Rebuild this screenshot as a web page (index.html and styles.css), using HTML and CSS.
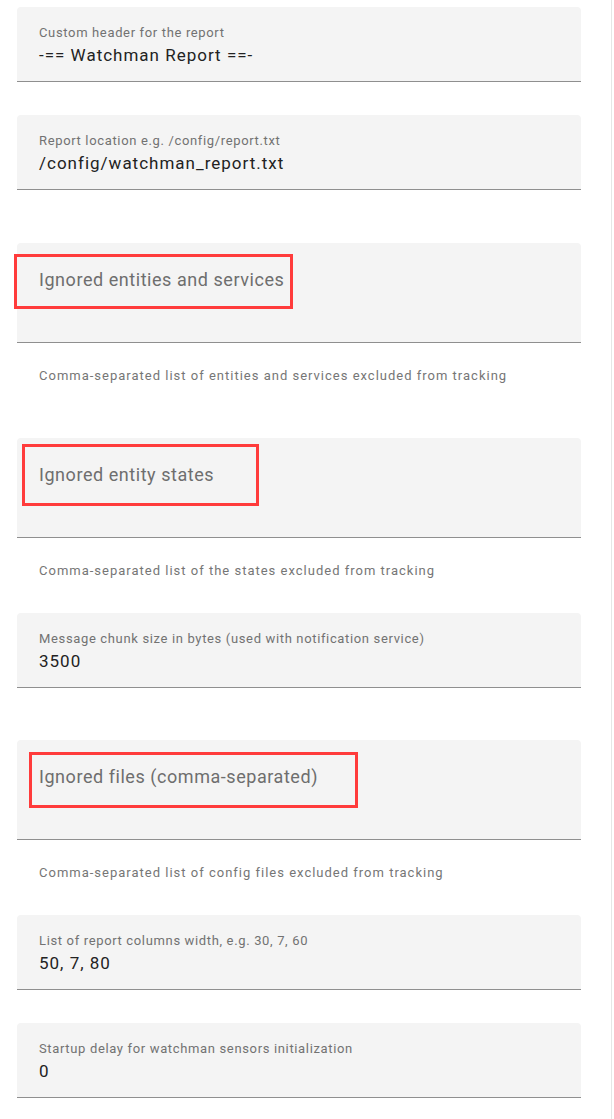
FILE: index.html
```html
<!DOCTYPE html>
<html lang="en">
<head>
    <meta charset="UTF-8">
    <meta name="viewport" content="width=device-width, initial-scale=1.0">
    <title>Watchman options</title>
    <link rel="stylesheet" href="styles.css">
</head>
<body>
    <div id="outer">
        <div class="field">
            <span class="label">Custom header for the report</span>
            <span class="value">-== Watchman Report ==-</span>
        </div>

        <div class="field">
            <span class="label">Report location e.g. /config/report.txt</span>
            <span class="value">/config/watchman_report.txt</span>
        </div>

        <div class="area">
            <span class="area-label">Ignored entities and services</span>
            <div class="mark mark-1"></div>
        </div>
        <div class="helper">Comma-separated list of entities and services excluded from tracking</div>

        <div class="area">
            <span class="area-label">Ignored entity states</span>
            <div class="mark mark-2"></div>
        </div>
        <div class="helper">Comma-separated list of the states excluded from tracking</div>

        <div class="field">
            <span class="label">Message chunk size in bytes (used with notification service)</span>
            <span class="value">3500</span>
        </div>

        <div class="area area-tight">
            <span class="area-label">Ignored files (comma-separated)</span>
            <div class="mark mark-3"></div>
        </div>
        <div class="helper">Comma-separated list of config files excluded from tracking</div>

        <div class="field">
            <span class="label">List of report columns width, e.g. 30, 7, 60</span>
            <span class="value">50, 7, 80</span>
        </div>

        <div class="field">
            <span class="label">Startup delay for watchman sensors initialization</span>
            <span class="value">0</span>
        </div>
    </div>
</body>
</html>
```

FILE: styles.css
```css
body{
    margin: 0;
    background-color: white;
    font-family: Roboto, "Liberation Sans", sans-serif;
}

#outer{
    width: 612px;
    min-height: 100vh;
    box-sizing: border-box;
    padding: 7px 30px 0 17px;
    border-right: 1px solid #e6e6e6;
    display: flex;
    flex-direction: column;
}

.field{
    flex-shrink: 0;
    height: 74px;
    margin-bottom: 33px;
    padding: 0 22px;
    background-color: #f4f4f4;
    border-radius: 4px 4px 0 0;
    border-bottom: 1px solid #8f8f8f;
    display: flex;
    flex-direction: column;
}

.label{
    margin-top: 18px;
    font-size: 13px;
    line-height: 16px;
    letter-spacing: 0.65px;
    color: #727272;
}

.value{
    margin-top: 2px;
    font-size: 17px;
    line-height: 24px;
    letter-spacing: 1px;
    color: #222;
}

.area{
    flex-shrink: 0;
    position: relative;
    height: 99px;
    margin-top: 20px;
    padding: 0 22px;
    background-color: #f4f4f4;
    border-radius: 4px 4px 0 0;
    border-bottom: 1px solid #8f8f8f;
}

.area-tight{
    margin-top: 19px;
}

.area-label{
    display: block;
    padding-top: 25px;
    font-size: 18px;
    line-height: 24px;
    letter-spacing: 0.55px;
    color: #6e6e6e;
}

.helper{
    flex-shrink: 0;
    height: 75px;
    box-sizing: border-box;
    padding: 25px 22px 0;
    font-size: 13px;
    line-height: 16px;
    letter-spacing: 1px;
    color: #767676;
}

/* red annotation boxes */
.mark{
    position: absolute;
    border: 3px solid #ff3b3b;
    box-sizing: border-box;
}
.mark-1{
    left: -3px;
    top: 11px;
    width: 279px;
    height: 55px;
}
.mark-2{
    left: 5px;
    top: 6px;
    width: 237px;
    height: 62px;
}
.mark-3{
    left: 12px;
    top: 12px;
    width: 329px;
    height: 56px;
}
```
